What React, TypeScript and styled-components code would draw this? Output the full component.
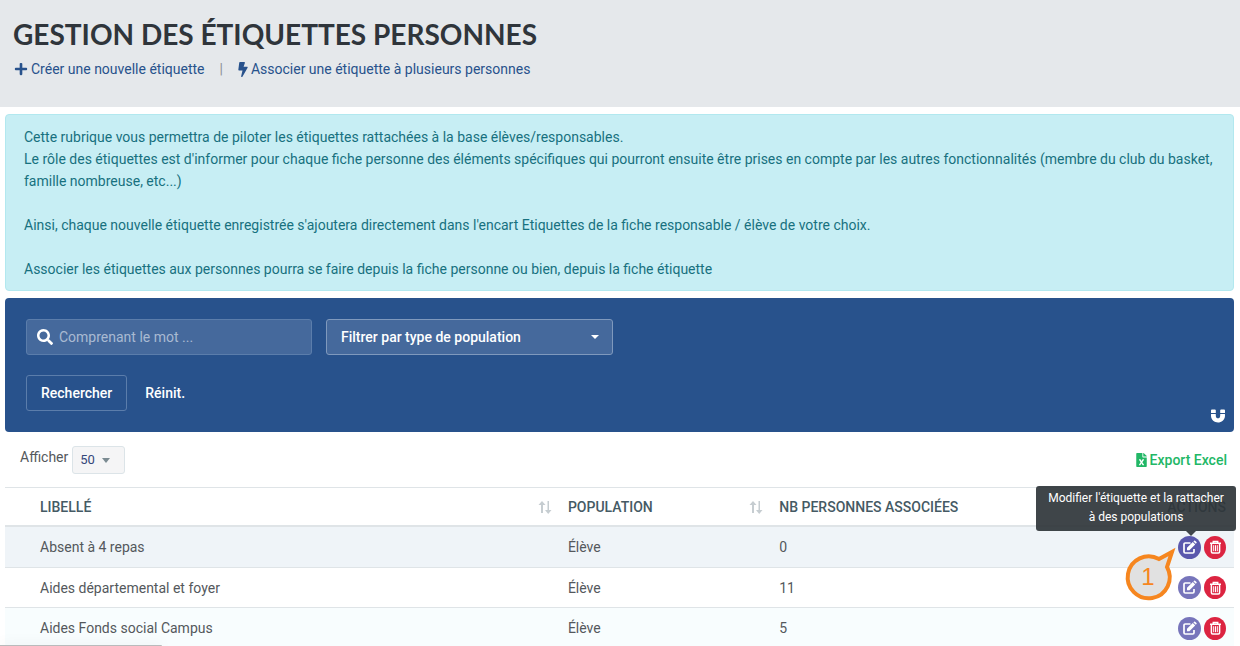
import React from "react";
import styled, { createGlobalStyle } from "styled-components";
import { FaPlus, FaBolt, FaSearch, FaMagnet, FaFileExcel } from "react-icons/fa";

const GlobalStyle = createGlobalStyle`
  *, *::before, *::after { box-sizing: border-box; }
  body {
    margin: 0;
    background: #fff;
    color: #54585c;
    font: 14px/22px Roboto, "Liberation Sans", sans-serif;
    overflow: hidden;
  }
  button, input, select { font: inherit; }
`;

const PageHeader = styled.header`
  padding: 16px 13px 27px;
  background: #e5e8eb;
`;

const Title = styled.h1`
  margin: 0;
  color: #2f353b;
  font: 700 28px/36px Lato, "Open Sans", sans-serif;
`;

const HeaderLinks = styled.nav`
  display: flex;
  align-items: center;
  gap: 15px;
  padding: 6px 1px 0;
`;

const Separator = styled.span`
  color: #8b9096;
`;

const IconLink = styled.a<{ $color: string; $medium?: boolean }>`
  display: inline-flex;
  align-items: center;
  gap: 3px;
  color: ${(p) => p.$color};
  font-weight: ${(p) => (p.$medium ? 500 : 400)};
  text-decoration: none;
`;

const BoltIcon = styled(FaBolt)`
  width: 10px;
  height: 15px;
`;

const ExcelIcon = styled(FaFileExcel)`
  width: 11px;
  height: 14px;
`;

const Main = styled.main`
  padding: 7px 6px 0 5px;
`;

const Info = styled.section`
  padding: 11px 18px 10px;
  border: 1px solid #b2e8ef;
  border-radius: 4px;
  background: #c7eef4;
  color: #17717f;
  p { margin: 0 0 22px; }
  p:last-child { margin: 0; }
`;

const Search = styled.form`
  display: flex;
  align-items: flex-end;
  justify-content: space-between;
  margin-top: 7px;
  padding: 21px 9px 21px 21px;
  border-radius: 4px;
  background: #28528c;
`;

const Fields = styled.div`
  display: grid;
  gap: 20px;
`;

const FieldRow = styled.div`
  display: flex;
  gap: 14px;
`;

const SearchBox = styled.label`
  display: flex;
  align-items: center;
  gap: 6px;
  width: 286px;
  height: 36px;
  padding: 0 10px;
  border: 1px solid #5b7dab;
  border-radius: 3px;
  background: #45699c;
  color: #fff;
`;

const SearchInput = styled.input`
  flex: 1;
  min-width: 0;
  padding: 0;
  border: 0;
  outline: 0;
  background: transparent;
  color: #fff;
  &::placeholder { color: #a9bad2; opacity: 1; }
`;

const SelectWrap = styled.div<{ $caret: string; $right: string; $height: string }>`
  position: relative;
  display: inline-flex;
  &::after {
    content: "";
    position: absolute;
    top: 50%;
    right: ${(p) => p.$right};
    margin-top: -2px;
    border: 4px solid transparent;
    border-top: ${(p) => p.$height} solid ${(p) => p.$caret};
    border-bottom: 0;
    pointer-events: none;
  }
`;

const FilterSelect = styled.select`
  appearance: none;
  width: 287px;
  height: 36px;
  padding: 0 14px;
  border: 1px solid #7f99bd;
  border-radius: 3px;
  background: #45699c;
  color: #fff;
  font-weight: 500;
`;

const SearchButton = styled.button<{ $outlined?: boolean }>`
  height: 36px;
  padding: 0 14px;
  border: 1px solid ${(p) => (p.$outlined ? "#5b7dab" : "transparent")};
  border-radius: 3px;
  background: transparent;
  color: #fff;
  font-weight: 500;
`;

const ButtonRow = styled.div`
  display: flex;
  gap: 3px;
`;

const MagnetButton = styled.button`
  display: flex;
  margin-bottom: -12px;
  padding: 0;
  border: 0;
  background: transparent;
  color: #fff;
`;

const Toolbar = styled.div`
  display: flex;
  align-items: center;
  justify-content: space-between;
  height: 55px;
  padding: 0 7px 0 15px;
`;

const PageSize = styled.div`
  display: flex;
  align-items: flex-start;
  gap: 4px;
`;

const SizeSelect = styled.select`
  appearance: none;
  width: 53px;
  height: 28px;
  padding: 0 7px;
  border: 1px solid #dce4e8;
  border-radius: 3px;
  background: #f5f5f6;
  color: #34477a;
  font-size: 13px;
`;

const Table = styled.table`
  width: 100%;
  border-collapse: separate;
  border-spacing: 0;
  table-layout: fixed;
`;

const Th = styled.th<{ $width: string; $end?: boolean }>`
  width: ${(p) => p.$width};
  height: 40px;
  padding: 0 8px 0 0;
  border-top: 1px solid #dfe4e7;
  border-bottom: 2px solid #dfe4e7;
  color: #455a64;
  font-weight: 500;
  text-align: ${(p) => (p.$end ? "right" : "left")};
  &:first-child { padding-left: 35px; }
`;

const HeadCell = styled.div`
  display: flex;
  align-items: center;
  justify-content: space-between;
  padding-right: 8px;
`;

const Td = styled.td`
  padding: 0;
  &:first-child { padding-left: 35px; }
`;

const Tr = styled.tr<{ $bg: string }>`
  background: ${(p) => p.$bg};
  td { height: 41px; border-bottom: 1px solid #dfe4e7; }
  &:nth-child(2) td { height: 40px; }
`;

const Actions = styled.div`
  position: relative;
  display: flex;
  justify-content: flex-end;
  gap: 3px;
  padding-right: 8px;
`;

const RoundButton = styled.button<{ $bg: string }>`
  display: flex;
  align-items: center;
  justify-content: center;
  width: 23px;
  height: 23px;
  padding: 0;
  border: 0;
  border-radius: 50%;
  background: ${(p) => p.$bg};
  color: #fff;
  & + & { width: 22px; }
`;

const Tooltip = styled.div`
  position: absolute;
  right: -2px;
  bottom: 28px;
  width: 200px;
  padding: 3px 8px 4px;
  border-radius: 3px;
  background: rgba(47, 53, 58, 0.92);
  color: #fff;
  font-size: 12px;
  line-height: 19px;
  text-align: center;
  z-index: 2;
  &::after {
    content: "";
    position: absolute;
    top: 100%;
    right: 40px;
    border: 5px solid transparent;
    border-top-color: #40464b;
    border-bottom: 0;
  }
`;

const Callout = styled.div`
  position: absolute;
  right: 57px;
  top: 10px;
  width: 54px;
  height: 58px;
  z-index: 3;
  color: #f6861f;
  font: 24px/46px "Liberation Sans", sans-serif;
  svg { position: absolute; inset: 0; overflow: visible; }
  span { position: absolute; left: 2px; top: 8px; width: 46px; text-align: center; }
`;

const StatusEdge = styled.div`
  position: fixed;
  left: 0;
  bottom: 0;
  width: 162px;
  height: 1px;
  background: #b9bbbc;
  border-top-right-radius: 3px;
  box-shadow: 0 0 12px rgba(0, 0, 0, 0.25);
`;

const SortIcon = () => (
  <svg width="14" height="14" viewBox="0 0 14 14" fill="#c6cdd1" aria-hidden="true">
    <path d="M3 13V5H.5L4 1l3.500 4H5v8zM9.500 1h1.500v9h2.500L10.200 14 7 10h2.500z" />
  </svg>
);

const EditIcon = () => (
  <svg width="15" height="15" viewBox="0 0 15 15" fill="none" aria-hidden="true">
    <path d="M8.500 3H3.200Q2 3 2 4.200v7.600Q2 13 3.200 13h7.600q1.200 0 1.200-1.200V9" stroke="currentColor" strokeWidth="1.700" />
    <path d="M5 10.200V7.800L10.800 2 13.200 4.400 7.400 10.200zM11.400 1.400l.7-.7q.5-.4 1 0L14.500 2.100q.4.500 0 1l-.7.7z" fill="currentColor" />
  </svg>
);

const TrashIcon = () => (
  <svg width="13" height="14" viewBox="0 0 13 14" fill="none" stroke="currentColor" aria-hidden="true">
    <path d="M1 3.200h11M4.300 3V1.400h4.400V3" strokeWidth="1.500" />
    <path d="M2.400 3.500v8.300q0 1.200 1.200 1.200h5.800q1.200 0 1.200-1.200V3.500" strokeWidth="1.500" />
    <path d="M4.700 5.200v6M6.500 5.200v6M8.300 5.200v6" strokeWidth="1" />
  </svg>
);

const rows = [
  { label: "Absent à 4 repas", population: "Élève", count: 0, bg: "#eff4f8" },
  { label: "Aides départemental et foyer", population: "Élève", count: 11, bg: "#ffffff" },
  { label: "Aides Fonds social Campus", population: "Élève", count: 5, bg: "#f8fdfe" },
];

export default function App() {
  return (
    <>
      <GlobalStyle />
      <PageHeader>
        <Title>GESTION DES ÉTIQUETTES PERSONNES</Title>
        <HeaderLinks>
          <IconLink href="#creer" $color="#28528c"><FaPlus size={14} />Créer une nouvelle étiquette</IconLink>
          <Separator>|</Separator>
          <IconLink href="#associer" $color="#28528c"><BoltIcon />Associer une étiquette à plusieurs personnes</IconLink>
        </HeaderLinks>
      </PageHeader>
      <Main>
        <Info>
          <p>
            Cette rubrique vous permettra de piloter les étiquettes rattachées à la base élèves/responsables.<br />
            Le rôle des étiquettes est d'informer pour chaque fiche personne des éléments spécifiques qui pourront ensuite être prises en compte par les autres fonctionnalités (membre du club du basket, famille nombreuse, etc...)
          </p>
          <p>Ainsi, chaque nouvelle étiquette enregistrée s'ajoutera directement dans l'encart Etiquettes de la fiche responsable / élève de votre choix.</p>
          <p>Associer les étiquettes aux personnes pourra se faire depuis la fiche personne ou bien, depuis la fiche étiquette</p>
        </Info>
        <Search onSubmit={(e) => e.preventDefault()}>
          <Fields>
            <FieldRow>
              <SearchBox>
                <FaSearch size={16} />
                <SearchInput type="text" placeholder="Comprenant le mot ..." aria-label="Comprenant le mot" />
              </SearchBox>
              <SelectWrap $caret="#fff" $right="14px" $height="4px">
                <FilterSelect aria-label="Filtrer par type de population">
                  <option>Filtrer par type de population</option>
                </FilterSelect>
              </SelectWrap>
            </FieldRow>
            <ButtonRow>
              <SearchButton type="submit" $outlined>Rechercher</SearchButton>
              <SearchButton type="reset">Réinit.</SearchButton>
            </ButtonRow>
          </Fields>
          <MagnetButton type="button" aria-label="Épingler"><FaMagnet size={14} /></MagnetButton>
        </Search>
        <Toolbar>
          <PageSize>
            <label htmlFor="page-size">Afficher</label>
            <SelectWrap $caret="#7b8b92" $right="15px" $height="5px">
              <SizeSelect id="page-size"><option>50</option></SizeSelect>
            </SelectWrap>
          </PageSize>
          <IconLink href="#export" $color="#22b766" $medium><ExcelIcon />Export Excel</IconLink>
        </Toolbar>
        <Table>
          <thead>
            <tr>
              <Th $width="45.8%"><HeadCell>LIBELLÉ<SortIcon /></HeadCell></Th>
              <Th $width="17.2%"><HeadCell>POPULATION<SortIcon /></HeadCell></Th>
              <Th $width="20%">NB PERSONNES ASSOCIÉES</Th>
              <Th $width="17%" $end>ACTIONS</Th>
            </tr>
          </thead>
          <tbody>
            {rows.map((row, i) => (
              <Tr key={row.label} $bg={row.bg}>
                <Td>{row.label}</Td>
                <Td>{row.population}</Td>
                <Td>{row.count}</Td>
                <Td>
                  <Actions>
                    {i === 0 && <Tooltip role="tooltip">Modifier l'étiquette et la rattacher à des populations</Tooltip>}
                    {i === 0 && (
                      <Callout>
                        <svg width="54" height="58" viewBox="0 0 54 58" aria-hidden="true">
                          <path d="M36 13 49 6 44 21A21 21 0 1 1 36 13Z" fill="#e1e1e1" stroke="#f6861f" strokeWidth="4" />
                        </svg>
                        <span>1</span>
                      </Callout>
                    )}
                    <RoundButton type="button" aria-label="Modifier" $bg={i === 0 ? "#5a58ad" : "#7775bb"}><EditIcon /></RoundButton>
                    <RoundButton type="button" aria-label="Supprimer" $bg="#dc2441"><TrashIcon /></RoundButton>
                  </Actions>
                </Td>
              </Tr>
            ))}
          </tbody>
        </Table>
      </Main>
      <StatusEdge />
    </>
  );
}
